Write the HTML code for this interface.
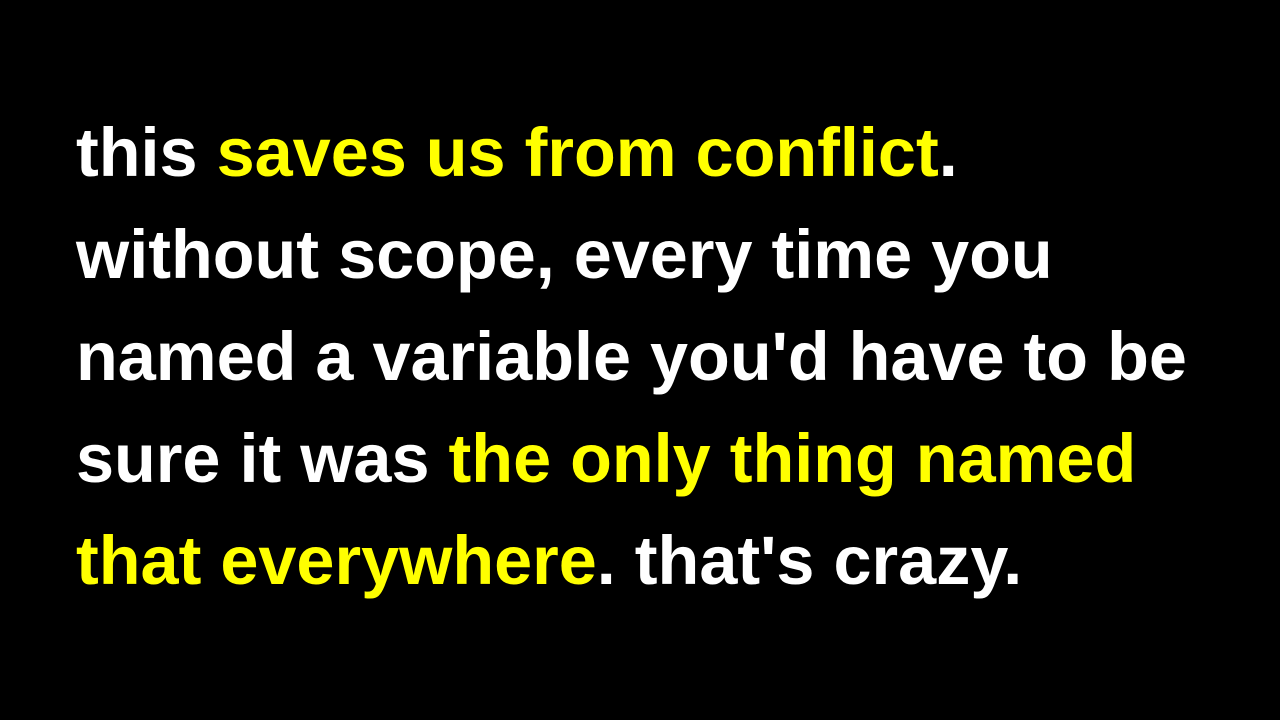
<!DOCTYPE html>
<html><head><meta charset="utf-8"><style>
html,body{margin:0;padding:0;background:#000;width:1280px;height:720px;overflow:hidden}
.t{position:absolute;left:76px;top:102px;font-family:"Liberation Sans",Arial,sans-serif;font-weight:bold;font-size:68.4px;line-height:102px;color:#fff;white-space:nowrap}
.y{color:#ffff00}
</style></head><body>
<div class="t">this <span class="y">saves us from conflict</span>.<br>without scope, every time you<br>named a variable you'd have to be<br>sure it was <span class="y">the only thing named</span><br><span class="y">that everywhere</span>. that's crazy.</div>
</body></html>
